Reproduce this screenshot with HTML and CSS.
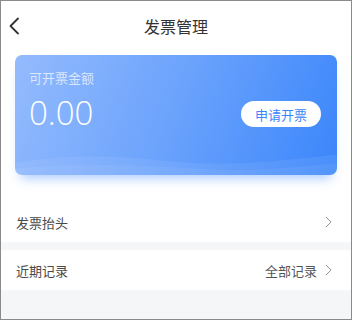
FILE: index.html
```html
<!DOCTYPE html>
<html lang="zh">

<head>
    <meta charset="UTF-8">
    <meta name="viewport" content="width=device-width, initial-scale=1.0">
    <title>发票管理</title>
    <link rel="stylesheet" href="styles.css">
</head>

<body>
    <div class="page">
        <!-- 顶部导航 -->
        <div class="nav-bar">
            <span class="back-icon">
                <svg width="12" height="18" viewBox="0 0 12 18">
                    <polyline points="10,1.5 2.5,9 10,16.5" fill="none" stroke="#333" stroke-width="1.8" stroke-linecap="round" stroke-linejoin="round" />
                </svg>
            </span>
            <div class="nav-title">发票管理</div>
        </div>

        <!-- 金额卡片 -->
        <div class="card-wrap">
            <div class="amount-card">
                <svg class="wave" viewBox="0 0 322 40" preserveAspectRatio="none">
                    <path d="M0,22 C40,10 90,8 150,18 C210,28 260,20 322,8 L322,40 L0,40 Z" fill="#ffffff" fill-opacity="0.07" />
                    <path d="M0,30 C60,22 120,24 180,30 C240,36 280,28 322,22 L322,40 L0,40 Z" fill="#ffffff" fill-opacity="0.06" />
                </svg>
                <div class="amount-label">可开票金额</div>
                <div class="amount-row">
                    <div class="amount-value">0.00</div>
                    <button class="apply-button">申请开票</button>
                </div>
            </div>
        </div>

        <!-- 列表 -->
        <div class="list-item">
            <span class="item-title">发票抬头</span>
            <span class="item-extra">
                <svg width="7" height="12" viewBox="0 0 7 12">
                    <polyline points="1,1 6,6 1,11" fill="none" stroke="#999" stroke-width="1" />
                </svg>
            </span>
        </div>
        <div class="divider"></div>
        <div class="list-item">
            <span class="item-title">近期记录</span>
            <span class="item-extra">全部记录
                <svg width="7" height="12" viewBox="0 0 7 12">
                    <polyline points="1,1 6,6 1,11" fill="none" stroke="#999" stroke-width="1" />
                </svg>
            </span>
        </div>
    </div>
</body>

</html>
```

FILE: styles.css
```css
* {
    margin: 0;
    padding: 0;
    box-sizing: border-box;
}

body {
    font-family: "Noto Sans CJK SC", "Noto Sans", sans-serif;
    background: #ffffff;
}

.page {
    width: 352px;
    height: 320px;
    border: 1px solid #8a8a8a;
    background: #f5f6f8;
    overflow: hidden;
}

/* 导航栏 */
.nav-bar {
    height: 50px;
    background: #ffffff;
    display: flex;
    align-items: center;
    justify-content: center;
    position: relative;
}

.back-icon {
    position: absolute;
    left: 7px;
    top: 16px;
    display: flex;
}

.nav-title {
    font-size: 16px;
    color: #333333;
}

/* 卡片 */
.card-wrap {
    background: #ffffff;
    padding: 4px 14px 27px 14px;
}

.amount-card {
    position: relative;
    height: 120px;
    border-radius: 7px;
    overflow: hidden;
    padding: 14px 16px 0 14px;
    background: linear-gradient(110deg, #94bbfd 0%, #6aa2fc 50%, #3b86fb 100%);
    box-shadow: 0 9px 12px -6px rgba(59, 134, 251, 0.45);
}

.wave {
    position: absolute;
    left: 0;
    bottom: 0;
    width: 100%;
    height: 26px;
}

.amount-label {
    font-size: 13px;
    line-height: 18px;
    color: rgba(255, 255, 255, 0.7);
}

.amount-row {
    display: flex;
    justify-content: space-between;
    align-items: center;
    margin-top: 7px;
}

.amount-value {
    font-family: "Open Sans", sans-serif;
    font-weight: 300;
    font-size: 33px;
    line-height: 38px;
    color: #ffffff;
}

.apply-button {
    width: 80px;
    height: 26px;
    border: none;
    border-radius: 13px;
    background: #ffffff;
    color: #3b86fb;
    font-family: "Noto Sans CJK SC", sans-serif;
    font-size: 13px;
    margin-top: 2px;
}

/* 列表 */
.list-item {
    height: 40px;
    background: #ffffff;
    display: flex;
    align-items: center;
    justify-content: space-between;
    padding: 0 19px 0 15px;
}

.item-title {
    font-size: 13px;
    color: #4a4a4a;
}

.item-extra {
    display: flex;
    align-items: center;
    gap: 8px;
    font-size: 13px;
    color: #555555;
}

.divider {
    height: 8px;
}
```
